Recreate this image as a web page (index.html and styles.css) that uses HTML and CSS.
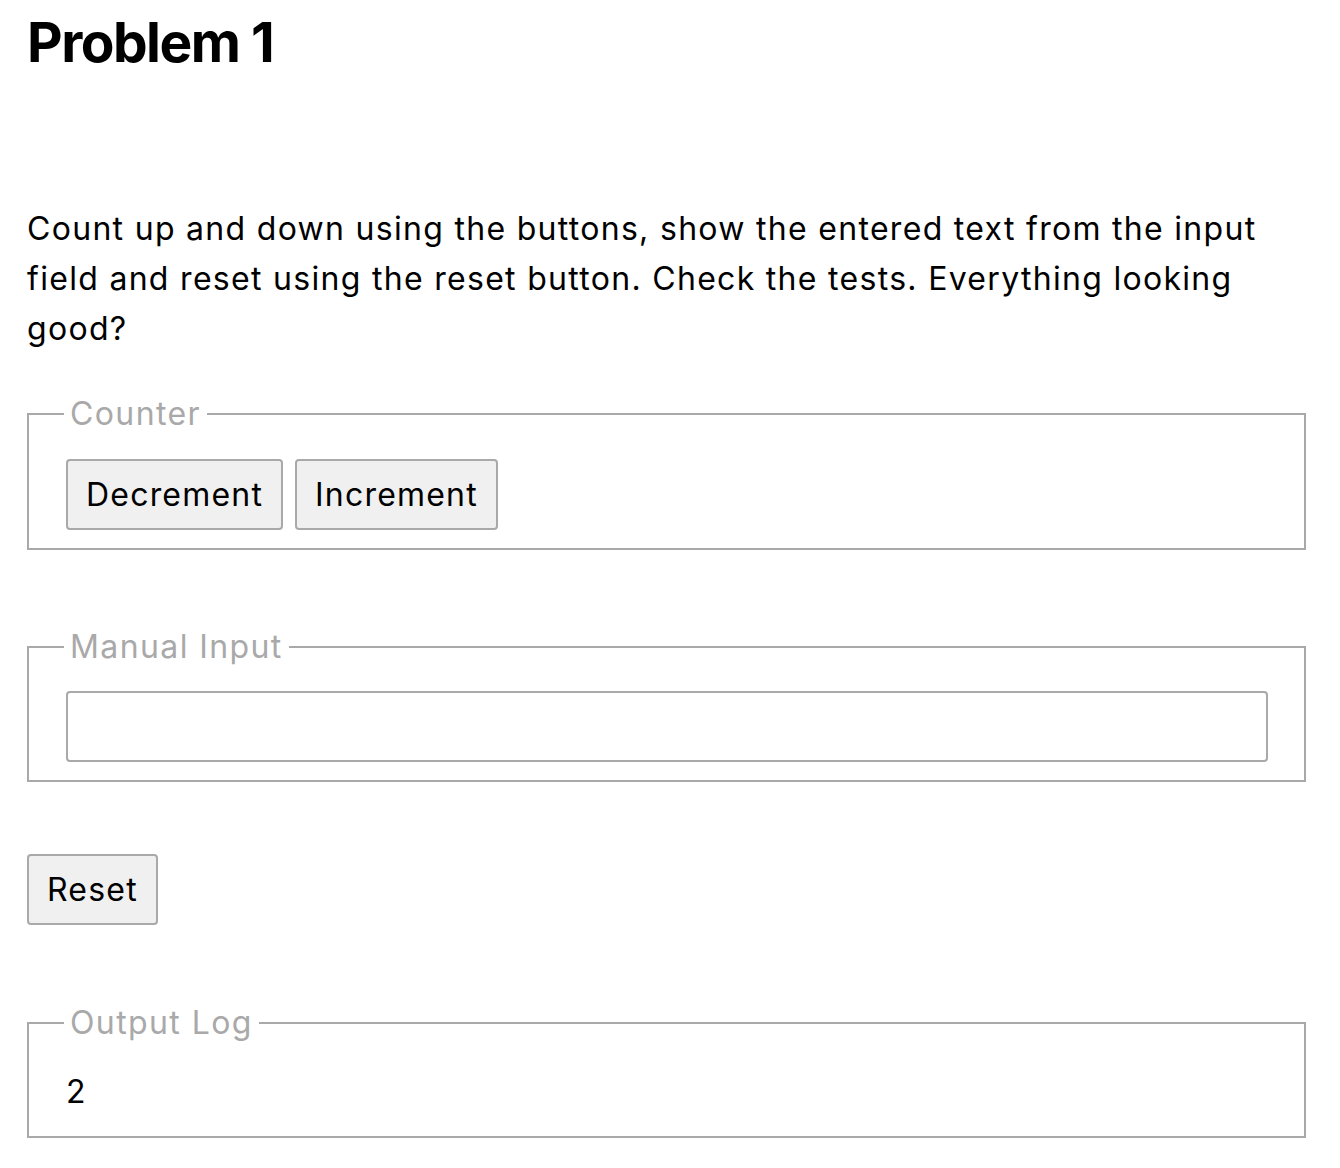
FILE: index.html
```html
<!DOCTYPE html>
<html lang="en">
<head>
<meta charset="utf-8">
<title>Problem 1</title>
<link rel="stylesheet" href="styles.css">
</head>
<body>
<main class="page">
  <h1 class="title">Problem 1</h1>
  <p class="intro">Count up and down using the buttons, show the entered text from the input field and reset using the reset button. Check the tests. Everything looking good?</p>
  <fieldset class="group">
    <legend class="group-label">Counter</legend>
    <div class="btn-row">
      <button class="btn" type="button">Decrement</button>
      <button class="btn" type="button">Increment</button>
    </div>
  </fieldset>
  <fieldset class="group group-input">
    <legend class="group-label">Manual Input</legend>
    <input class="text-input" type="text">
  </fieldset>
  <div class="reset-row">
    <button class="btn" type="button">Reset</button>
  </div>
  <fieldset class="group group-output">
    <legend class="group-label">Output Log</legend>
    <div class="output">2</div>
  </fieldset>
</main>
</body>
</html>
```

FILE: styles.css
```css
html, body {
  margin: 0;
  padding: 0;
  background: #ffffff;
}

body {
  font-family: Inter, "Liberation Sans", Arial, sans-serif;
  color: #000000;
}

.page {
  padding: 9px 34px 0 27px;
}

.title {
  margin: 0;
  font-size: 55px;
  line-height: 67px;
  font-weight: 700;
  letter-spacing: -1.5px;
}

.intro {
  margin: 128px 0 0 0;
  font-size: 32px;
  line-height: 50px;
  letter-spacing: 1.3px;
}

.group {
  margin: 41px 0 0 0;
  border: 2px solid #a9a9a9;
  padding: 26px 36px 18px 37px;
}

.group-label {
  font-size: 32px;
  line-height: 38px;
  color: #a9a9a9;
  padding: 0 6px;
  margin-left: -2px;
  letter-spacing: 1.4px;
}

.btn-row {
  display: flex;
  gap: 12px;
}

.btn {
  font-family: Inter, "Liberation Sans", Arial, sans-serif;
  font-size: 32px;
  letter-spacing: 1.2px;
  height: 71px;
  padding: 0 18px;
  background: #f0f0f0;
  color: #000000;
  border: 2px solid #a9a9a9;
  border-radius: 4px;
  margin: 0;
}

.group-input {
  margin-top: 78px;
  padding-top: 25px;
}

.text-input {
  display: block;
  box-sizing: border-box;
  width: 100%;
  height: 71px;
  margin: 0;
  border: 2px solid #a9a9a9;
  border-radius: 4px;
  font-size: 32px;
  padding: 0 12px;
  font-family: Inter, "Liberation Sans", Arial, sans-serif;
}

.reset-row {
  margin-top: 72px;
}

.group-output {
  margin-top: 79px;
  padding-top: 31px;
  padding-bottom: 25px;
}

.output {
  font-size: 32px;
  line-height: 38px;
}
```
